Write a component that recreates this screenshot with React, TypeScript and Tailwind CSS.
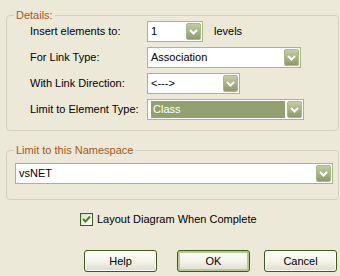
const FONT = "font-['Liberation_Sans',Arial,sans-serif]";

function Chevron() {
  return (
    <svg width="9" height="6" viewBox="0 0 9 6" className="block">
      <path d="M1 1 L4.5 4.5 L8 1" fill="none" stroke="#fff" strokeWidth="2" />
    </svg>
  );
}

function DropButton() {
  return (
    <span className="flex h-[17px] w-[15px] shrink-0 items-center justify-center rounded-[2px] border border-[#a9b78b] bg-gradient-to-b from-[#c3cda6] to-[#8d9b69]">
      <Chevron />
    </span>
  );
}

function Combo({ value, width, selected }: { value: string; width: string; selected?: boolean }) {
  return (
    <div className={`flex h-[21px] ${width} items-center border border-[#a4b97f] bg-white p-[1px]`}>
      {selected ? (
        <span className="mx-[2px] my-[1px] flex h-[17px] flex-1 items-center bg-[#93a070] pl-[2px] text-white">
          {value}
        </span>
      ) : (
        <span className="flex-1 pl-[2px]">{value}</span>
      )}
      <DropButton />
    </div>
  );
}

function Row({ label, children }: { label: string; children: React.ReactNode }) {
  return (
    <div className="flex items-center">
      <span className="w-[117px] shrink-0">{label}</span>
      {children}
    </div>
  );
}

function Button({ label, primary, margin }: { label: string; primary?: boolean; margin: string }) {
  return (
    <button
      className={`${margin} h-[22px] w-[73px] rounded-[3px] border border-[#3b5a1c] bg-gradient-to-b from-[#fffff9] via-[#f5f4ea] to-[#dedcca] text-[11px] text-black ${
        primary ? "shadow-[inset_0_0_0_2px_#b9c993]" : "shadow-[inset_0_0_0_1px_#ffffff]"
      }`}
    >
      {label}
    </button>
  );
}

export default function App() {
  return (
    <div className={`${FONT} h-[276px] w-[340px] bg-[#ece9d8] pl-[6px] pt-[9px] text-[11px] text-black`}>
      <fieldset className="w-[333px] rounded-[4px] border border-[#d0d0bf] pb-[10px]">
        <legend className="ml-[7px] px-[2px] leading-[12px] text-[#a8561c]">Details:</legend>
        <div className="flex flex-col gap-[5px] pl-[23px]">
          <Row label="Insert elements to:">
            <Combo value="1" width="w-[56px]" />
            <span className="ml-[11px]">levels</span>
          </Row>
          <Row label="For Link Type:">
            <Combo value="Association" width="w-[154px]" />
          </Row>
          <Row label="With Link Direction:">
            <Combo value="<--->" width="w-[93px]" />
          </Row>
          <Row label="Limit to Element Type:">
            <Combo value="Class" width="w-[157px]" selected />
          </Row>
        </div>
      </fieldset>

      <fieldset className="mt-[13px] w-[333px] rounded-[4px] border border-[#d0d0bf] pb-[15px] pl-[8px] pt-[7px]">
        <legend className="ml-[-1px] px-[2px] leading-[12px] text-[#a8561c]">Limit to this Namespace</legend>
        <Combo value="vsNET" width="w-[318px]" />
      </fieldset>

      <label className="ml-[74px] mt-[13px] flex h-[13px] items-center">
        <span className="flex h-[13px] w-[13px] items-center justify-center border border-[#3d5c1d] bg-gradient-to-br from-[#dcdccc] to-white">
          <svg width="9" height="9" viewBox="0 0 9 9" className="block">
            <path d="M1 4 L3.5 6.5 L8 1.5" fill="none" stroke="#4a8420" strokeWidth="2" />
          </svg>
        </span>
        <span className="ml-[4px] leading-[13px]">Layout Diagram When Complete</span>
      </label>

      <div className="mt-[24px] flex">
        <Button label="Help" margin="ml-[78px]" />
        <Button label="OK" primary margin="ml-[20px]" />
        <Button label="Cancel" margin="ml-[14px]" />
      </div>
    </div>
  );
}
